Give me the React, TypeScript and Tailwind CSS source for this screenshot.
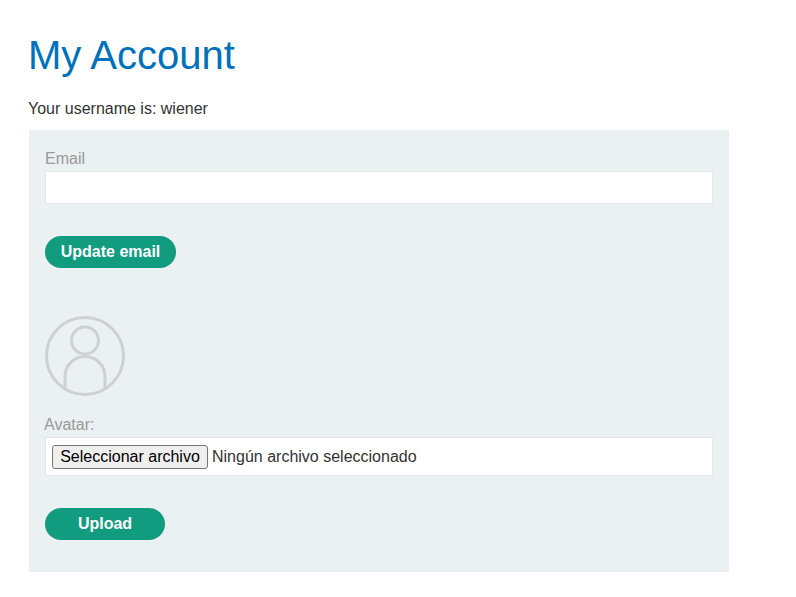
export default function App() {
  return (
    <div className="min-h-[597px] bg-white font-['Liberation_Sans',Arial,sans-serif] text-[16px] text-[#333332]">
      <div className="w-[700px] ml-[29px] pt-[30px]">
        <h1 className="text-[40px] leading-[50px] text-[#0071bc] mb-[19px] -ml-px">My Account</h1>
        <p className="leading-[19px] mb-[12px] -ml-px">Your username is: wiener</p>
        <div className="bg-[#ebf0f2] px-[16px] pt-[19px] pb-[32px]">
          <label className="block text-[#999] leading-[19px] mb-[3px]">Email</label>
          <input className="block w-full h-[33px] bg-white border border-[#e6e6e6]" />
          <button className="mt-[32px] block h-[32px] w-[131px] rounded-[25px] bg-[#119b7f] text-white font-bold">Update email</button>
          <svg className="mt-[48px] block" width="80" height="80" viewBox="0 0 80 80" fill="none" stroke="#cdd1d3" strokeWidth="3">
            <circle cx="40" cy="40" r="38.5" />
            <circle cx="40" cy="24.5" r="13.5" />
            <path d="M20 74V60.5a20 20 0 0 1 40 0V74" />
          </svg>
          <label className="block mt-[19px] -ml-px text-[#999] leading-[19px] mb-[3px]">Avatar:</label>
          <div className="bg-white border border-[#e6e6e6] h-[39px] flex items-center px-[6px]">
            <button className="h-[24px] w-[156px] bg-[#efefef] border border-[#767676] rounded-[3px] text-black leading-none">Seleccionar archivo</button>
            <span className="ml-[4px]">Ningún archivo seleccionado</span>
          </div>
          <button className="mt-[32px] block h-[32px] w-[120px] rounded-[25px] bg-[#119b7f] text-white font-bold">Upload</button>
        </div>
      </div>
    </div>
  );
}
